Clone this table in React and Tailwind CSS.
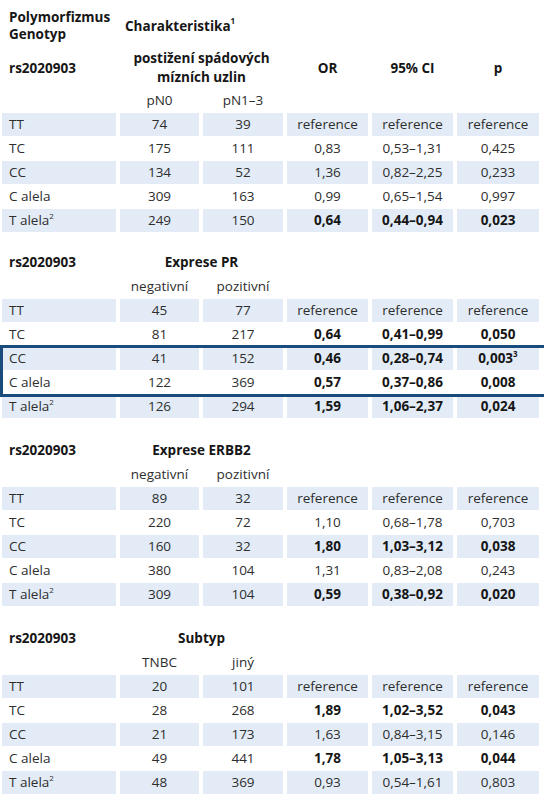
import React from "react";

const GRID = "grid grid-cols-[114px_79px_80px_81px_81px_82px] gap-x-[4px]";
const SHADE = "bg-[#e3ecf6]";

function Sup({ children }) {
  return <sup className="text-[8px] relative -top-[1px] align-super leading-none">{children}</sup>;
}

function Row({ label, sup, a, b, or, ci, p, bold, shaded, pSup }) {
  const bg = shaded ? SHADE : "";
  const w = bold ? "font-bold text-[#161616]" : "";
  return (
    <div className={`${GRID} h-[23px]`}>
      <div className={`${bg} pl-[7px] flex items-center`}>
        <span>
          {label}
          {sup && <Sup>{sup}</Sup>}
        </span>
      </div>
      <div className={`${bg} flex items-center justify-center`}>{a}</div>
      <div className={`${bg} flex items-center justify-center`}>{b}</div>
      <div className={`${bg} flex items-center justify-center ${w}`}>{or}</div>
      <div className={`${bg} flex items-center justify-center ${w}`}>{ci}</div>
      <div className={`${bg} flex items-center justify-center ${w}`}>
        <span>
          {p}
          {pSup && <Sup>{pSup}</Sup>}
        </span>
      </div>
    </div>
  );
}

function SubRow({ a, b }) {
  return (
    <div className={`${GRID} h-[23px]`}>
      <div />
      <div className="flex items-center justify-center">{a}</div>
      <div className="flex items-center justify-center">{b}</div>
      <div />
      <div />
      <div />
    </div>
  );
}

function TitleRow({ title }) {
  return (
    <div className={`${GRID} h-[23px] font-bold text-[#161616]`}>
      <div className="pl-[7px] flex items-center">rs2020903</div>
      <div className="col-span-2 flex items-center justify-center">{title}</div>
      <div />
      <div />
      <div />
    </div>
  );
}

const REF = "reference";

export default function App() {
  return (
    <div
      className="w-[544px] h-[800px] bg-white text-[13.5px] text-[#2e2e2e] pl-[2px] overflow-hidden"
      style={{ fontFamily: '"Open Sans", "Noto Sans", sans-serif' }}
    >
      {/* Header */}
      <div className={`${GRID} pt-[9px] font-bold text-[#161616] leading-[17px]`}>
        <div className="pl-[7px]">
          <div>Polymorfizmus</div>
          <div>Genotyp</div>
        </div>
        <div className="col-span-3 pl-[5px] flex items-center whitespace-nowrap">
          <span>
            Charakteristika<Sup>1</Sup>
          </span>
        </div>
      </div>

      {/* Section 1 */}
      <div className="mt-[5px] flex flex-col gap-px">
        <div className={`${GRID} h-[40px] font-bold text-[#161616]`}>
          <div className="pl-[7px] flex items-center">rs2020903</div>
          <div className="col-span-2 flex flex-col items-center justify-center leading-[19px] whitespace-nowrap">
            <div>postižení spádových</div>
            <div>mízních uzlin</div>
          </div>
          <div className="flex items-center justify-center">OR</div>
          <div className="flex items-center justify-center">95% CI</div>
          <div className="flex items-center justify-center">p</div>
        </div>
        <SubRow a="pN0" b="pN1–3" />
        <Row label="TT" a="74" b="39" or={REF} ci={REF} p={REF} shaded />
        <Row label="TC" a="175" b="111" or="0,83" ci="0,53–1,31" p="0,425" />
        <Row label="CC" a="134" b="52" or="1,36" ci="0,82–2,25" p="0,233" shaded />
        <Row label="C alela" a="309" b="163" or="0,99" ci="0,65–1,54" p="0,997" />
        <Row label="T alela" sup="2" a="249" b="150" or="0,64" ci="0,44–0,94" p="0,023" bold shaded />
      </div>

      {/* Section 2 */}
      <div className="mt-[19px] flex flex-col gap-px">
        <TitleRow title="Exprese PR" />
        <SubRow a="negativní" b="pozitivní" />
        <Row label="TT" a="45" b="77" or={REF} ci={REF} p={REF} shaded />
        <Row label="TC" a="81" b="217" or="0,64" ci="0,41–0,99" p="0,050" bold />
        <div className="relative flex flex-col gap-px">
          <Row label="CC" a="41" b="152" or="0,46" ci="0,28–0,74" p="0,003" pSup="3" bold shaded />
          <Row label="C alela" a="122" b="369" or="0,57" ci="0,37–0,86" p="0,008" bold />
          <div className="absolute -top-[2px] -bottom-[3px] -left-[2px] -right-[3px] border-[3px] border-[#194b7d] pointer-events-none" />
        </div>
        <Row label="T alela" sup="2" a="126" b="294" or="1,59" ci="1,06–2,37" p="0,024" bold shaded />
      </div>

      {/* Section 3 */}
      <div className="mt-[21px] flex flex-col gap-px">
        <TitleRow title="Exprese ERBB2" />
        <SubRow a="negativní" b="pozitivní" />
        <Row label="TT" a="89" b="32" or={REF} ci={REF} p={REF} shaded />
        <Row label="TC" a="220" b="72" or="1,10" ci="0,68–1,78" p="0,703" />
        <Row label="CC" a="160" b="32" or="1,80" ci="1,03–3,12" p="0,038" bold shaded />
        <Row label="C alela" a="380" b="104" or="1,31" ci="0,83–2,08" p="0,243" />
        <Row label="T alela" sup="2" a="309" b="104" or="0,59" ci="0,38–0,92" p="0,020" bold shaded />
      </div>

      {/* Section 4 */}
      <div className="mt-[21px] flex flex-col gap-px">
        <TitleRow title="Subtyp" />
        <SubRow a="TNBC" b="jiný" />
        <Row label="TT" a="20" b="101" or={REF} ci={REF} p={REF} shaded />
        <Row label="TC" a="28" b="268" or="1,89" ci="1,02–3,52" p="0,043" bold />
        <Row label="CC" a="21" b="173" or="1,63" ci="0,84–3,15" p="0,146" shaded />
        <Row label="C alela" a="49" b="441" or="1,78" ci="1,05–3,13" p="0,044" bold />
        <Row label="T alela" sup="2" a="48" b="369" or="0,93" ci="0,54–1,61" p="0,803" shaded />
      </div>
    </div>
  );
}
